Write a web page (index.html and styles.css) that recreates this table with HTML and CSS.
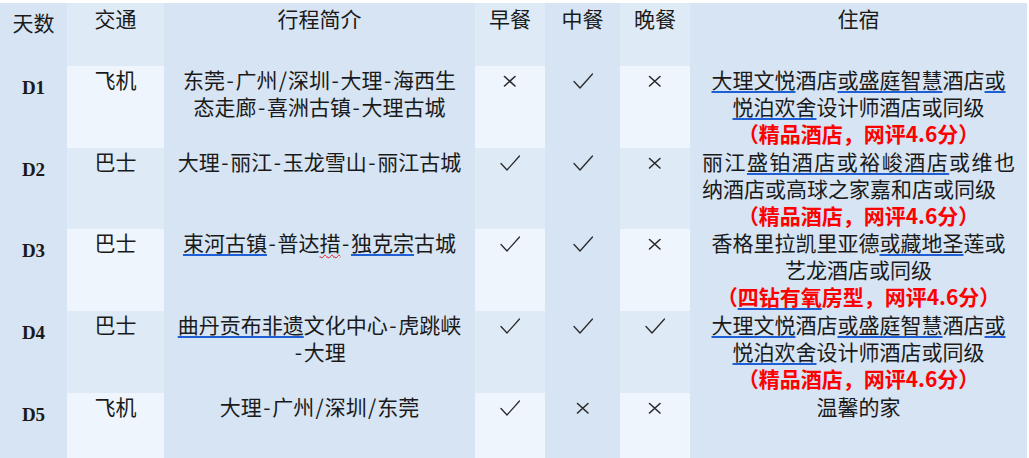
FILE: index.html
```html
<!DOCTYPE html>
<html lang="zh-CN">
<head>
<meta charset="utf-8">
<title>行程</title>
<link rel="stylesheet" href="styles.css">
</head>
<body>
<table class="trip">
  <colgroup>
    <col class="w-day"><col class="w-traffic"><col class="w-route"><col class="w-meal1"><col class="w-meal2"><col class="w-meal3"><col class="w-hotel">
  </colgroup>
  <tr class="head">
    <th class="day">天数</th>
    <th class="band">交通</th>
    <th>行程简介</th>
    <th class="band">早餐</th>
    <th>中餐</th>
    <th class="band">晚餐</th>
    <th>住宿</th>
  </tr>
  <tr class="odd">
    <td class="day"><span class="dlabel">D1</span></td>
    <td class="band">飞机</td>
    <td>东莞<span class="hw">-</span>广州<span class="hw">/</span>深圳<span class="hw">-</span>大理<span class="hw">-</span>海西生<br>态走廊<span class="hw">-</span>喜洲古镇<span class="hw">-</span>大理古城</td>
    <td class="band meal"><svg class="no" viewBox="0 0 20 16"><path d="M4.5 3.5 L15 13 M15 3.5 L4.5 13"/></svg></td>
    <td class="meal"><svg class="yes" viewBox="0 0 20 16"><path d="M1 8.5 L7 15 L19.5 1"/></svg></td>
    <td class="band meal"><svg class="no" viewBox="0 0 20 16"><path d="M4.5 3.5 L15 13 M15 3.5 L4.5 13"/></svg></td>
    <td class="hotel"><span class="u">大理文悦</span>酒店<span class="u">或盛庭智慧</span>酒店<span class="u">或</span><br><span class="u">悦泊欢舍</span>设计师酒店或同级<br><span class="red">（精品酒店，网评4.6分）</span></td>
  </tr>
  <tr class="even r81">
    <td class="day"><span class="dlabel">D2</span></td>
    <td class="band">巴士</td>
    <td>大理<span class="hw">-</span>丽江<span class="hw">-</span>玉龙雪山<span class="hw">-</span>丽江古城</td>
    <td class="band meal"><svg class="yes" viewBox="0 0 20 16"><path d="M1 8.5 L7 15 L19.5 1"/></svg></td>
    <td class="meal"><svg class="yes" viewBox="0 0 20 16"><path d="M1 8.5 L7 15 L19.5 1"/></svg></td>
    <td class="band meal"><svg class="no" viewBox="0 0 20 16"><path d="M4.5 3.5 L15 13 M15 3.5 L4.5 13"/></svg></td>
    <td class="hotel"><p class="just">丽江<span class="u">盛铂酒店或裕峻酒店</span>或维也纳酒店或高球之家嘉和店或同级</p><span class="red">（精品酒店，网评4.6分）</span></td>
  </tr>
  <tr class="odd">
    <td class="day"><span class="dlabel">D3</span></td>
    <td class="band">巴士</td>
    <td><span class="u">束河古镇</span><span class="hw">-</span>普达<span class="wavy">措</span><span class="hw">-</span><span class="u">独克宗</span>古城</td>
    <td class="band meal"><svg class="yes" viewBox="0 0 20 16"><path d="M1 8.5 L7 15 L19.5 1"/></svg></td>
    <td class="meal"><svg class="yes" viewBox="0 0 20 16"><path d="M1 8.5 L7 15 L19.5 1"/></svg></td>
    <td class="band meal"><svg class="no" viewBox="0 0 20 16"><path d="M4.5 3.5 L15 13 M15 3.5 L4.5 13"/></svg></td>
    <td class="hotel">香格里拉凯里亚德<span class="u">或藏地圣</span>莲或<br>艺龙酒店或同级<br><span class="red">（<span class="u">四钻有氧</span>房型，网评4.6分）</span></td>
  </tr>
  <tr class="even">
    <td class="day"><span class="dlabel">D4</span></td>
    <td class="band">巴士</td>
    <td><span class="u">曲丹贡布非遗</span>文化中心<span class="hw">-</span>虎跳峡<br><span class="hw">-</span>大理</td>
    <td class="band meal"><svg class="yes" viewBox="0 0 20 16"><path d="M1 8.5 L7 15 L19.5 1"/></svg></td>
    <td class="meal"><svg class="yes" viewBox="0 0 20 16"><path d="M1 8.5 L7 15 L19.5 1"/></svg></td>
    <td class="band meal"><svg class="yes" viewBox="0 0 20 16"><path d="M1 8.5 L7 15 L19.5 1"/></svg></td>
    <td class="hotel"><span class="u">大理文悦</span>酒店<span class="u">或盛庭智慧</span>酒店<span class="u">或</span><br><span class="u">悦泊欢舍</span>设计师酒店或同级<br><span class="red">（精品酒店，网评4.6分）</span></td>
  </tr>
  <tr class="odd">
    <td class="day"><span class="dlabel">D5</span></td>
    <td class="band">飞机</td>
    <td>大理<span class="hw">-</span>广州<span class="hw">/</span>深圳<span class="hw">/</span>东莞</td>
    <td class="band meal"><svg class="yes" viewBox="0 0 20 16"><path d="M1 8.5 L7 15 L19.5 1"/></svg></td>
    <td class="meal"><svg class="no" viewBox="0 0 20 16"><path d="M4.5 3.5 L15 13 M15 3.5 L4.5 13"/></svg></td>
    <td class="band meal"><svg class="no" viewBox="0 0 20 16"><path d="M4.5 3.5 L15 13 M15 3.5 L4.5 13"/></svg></td>
    <td class="hotel">温馨的家</td>
  </tr>
</table>
</body>
</html>
```

FILE: styles.css
```css
html, body {
  margin: 0;
  padding: 0;
  background: #ffffff;
  overflow: hidden;
  height: 458px;
}

body {
  padding-top: 3px;
  font-family: "Noto Sans CJK SC", "Noto Sans", sans-serif;
  color: #1a1a1a;
}

.trip {
  border-collapse: collapse;
  border-spacing: 0;
  table-layout: fixed;
  width: 1027px;
  font-size: 21px;
  line-height: 27px;
}

.w-day { width: 67px; }
.w-traffic { width: 97px; }
.w-route { width: 311px; }
.w-meal1 { width: 70px; }
.w-meal2 { width: 75px; }
.w-meal3 { width: 70px; }
.w-hotel { width: 337px; }

.trip th,
.trip td {
  padding: 0;
  text-align: center;
  vertical-align: top;
  background: #d6e4f3;
  font-weight: normal;
  white-space: nowrap;
}

.head { height: 63px; }
.head th { padding-top: 2px; }
.odd, .even { height: 82px; }
.r81 { height: 81px; }

.head .band,
.even .band { background: #deeaf6; }
.odd .band { background: #eef5fc; }

.trip .day { padding-top: 6px; }
.trip .head .day { padding-top: 6px; }

.dlabel {
  font-family: "Liberation Serif", "Times New Roman", serif;
  font-weight: bold;
  font-size: 19px;
}

.hw {
  display: inline-block;
  width: 0.5em;
  text-align: center;
}

.meal svg {
  display: block;
  width: 20px;
  height: 16px;
  margin: 7px auto 0;
  fill: none;
  stroke: #2a2a2a;
  stroke-linecap: round;
  stroke-linejoin: round;
}
.meal .yes { stroke-width: 1.3; }
.meal .no { stroke-width: 1.6; }

.trip .hotel {
  padding-left: 12px;
  padding-right: 12px;
}

.just {
  margin: 0;
  white-space: normal;
  text-align: justify;
  text-align-last: left;
}

.red {
  color: #ff0000;
  font-weight: bold;
}

.u {
  text-decoration: underline;
  text-decoration-color: #1f5fd6;
  text-decoration-thickness: 2px;
  text-underline-offset: 3px;
}

.wavy {
  text-decoration: underline wavy #e02020;
  text-decoration-thickness: 1px;
  text-underline-offset: 3px;
}
```
